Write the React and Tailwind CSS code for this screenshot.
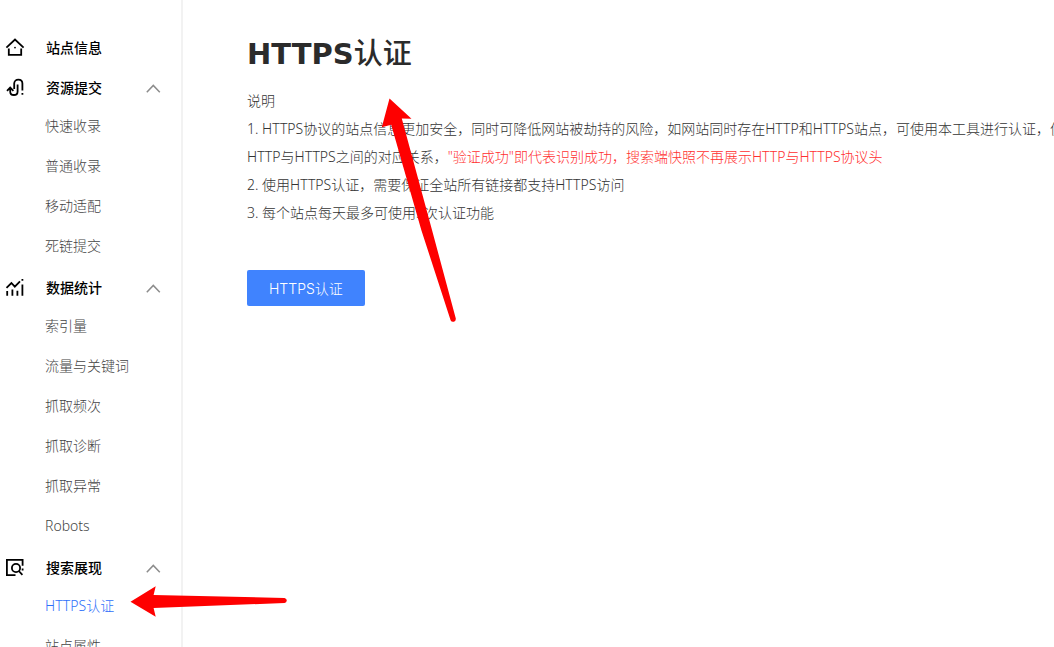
const groups = [
  { title: '站点信息', icon: HomeIcon },
  {
    title: '资源提交',
    icon: SubmitIcon,
    items: ['快速收录', '普通收录', '移动适配', '死链提交'],
  },
  {
    title: '数据统计',
    icon: StatsIcon,
    items: ['索引量', '流量与关键词', '抓取频次', '抓取诊断', '抓取异常', 'Robots'],
  },
  {
    title: '搜索展现',
    icon: SearchIcon,
    items: ['HTTPS认证', '站点属性'],
  },
];

const current = 'HTTPS认证';

function Icon({ children }) {
  return (
    <svg
      viewBox="0 0 20 20"
      className="size-5 shrink-0"
      fill="none"
      stroke="currentColor"
      strokeWidth="1.8"
      aria-hidden="true"
    >
      {children}
    </svg>
  );
}

function HomeIcon() {
  return (
    <Icon>
      <path d="M1.4 9.6 10 1.6l8.6 8M3.8 10.4v6.4h12.4v-6.4" />
      <circle cx="10" cy="9.6" r=".9" fill="currentColor" stroke="none" />
    </Icon>
  );
}

function SubmitIcon() {
  return (
    <Icon>
      <path d="M2 12.8 5.2 9.6l3.2 3.2M5.2 10v3.4c0 4.8 7.4 4.8 7.4 0V6.4M9.2 11V5.6c0-5.4 8.2-5.4 8.2 0v7M17.4 15v1.8" />
    </Icon>
  );
}

function StatsIcon() {
  return (
    <Icon>
      <path d="M1.5 9.8 6.4 5l3.4 3.6 5.2-5.2M2.2 13v4.8M7.4 11.6v6.2M12.4 12.8v5M17.4 6.6v11.2M17.4 1v1.8" />
    </Icon>
  );
}

function SearchIcon() {
  return (
    <Icon>
      <path d="M10.5 17.2H1.9V1.8h15.7v6M17.6 10.6v1.8" />
      <circle cx="11" cy="10" r="4.1" />
      <path d="m13.8 13 3.6 3.8" />
    </Icon>
  );
}

function Chevron() {
  return (
    <svg
      viewBox="0 0 16 10"
      className="h-2.5 w-4"
      fill="none"
      stroke="currentColor"
      strokeWidth="1.5"
      aria-hidden="true"
    >
      <path d="m1.8 9.2 6.5-6.8 6.5 6.8" />
    </svg>
  );
}

function Sidebar() {
  return (
    <nav className="w-[183px] shrink-0 border-r-2 border-[#f2f2f2] pt-7">
      {groups.map(({ title, icon: GroupIcon, items }) => (
        <section key={title}>
          <button
            type="button"
            className="flex h-10 w-full items-center pr-5 pl-[5px] font-medium text-black"
          >
            <GroupIcon />
            <span className="ml-[21px] flex-1 text-left">{title}</span>
            {items && (
              <span className="text-[#8c8c8c]">
                <Chevron />
              </span>
            )}
          </button>
          {items && (
            <ul>
              {items.map((item) => (
                <li key={item}>
                  <a
                    href="#"
                    className={
                      item === current
                        ? 'flex h-10 items-center pb-1 pl-[45px] font-light text-[#2f70fa]'
                        : 'flex h-10 items-center pb-1 pl-[45px] font-light text-[#444]'
                    }
                  >
                    {item}
                  </a>
                </li>
              ))}
            </ul>
          )}
        </section>
      ))}
    </nav>
  );
}

function Arrows() {
  return (
    <svg
      className="pointer-events-none absolute top-0 left-0 h-[647px] w-[500px]"
      viewBox="0 0 500 647"
      fill="#fe0000"
      aria-hidden="true"
    >
      <path d="M389.5 98.5 411.5 118.8 401.8 118.4 432 230 455.8 318.5Q456 321 454 321.7 451.5 322.3 450.6 320.2L421.3 230 391.2 124.8 381.8 127.3Z" />
      <path d="M130.5 601.8 155.7 586.2 153.6 595 284.5 598Q286.8 598.6 286.8 600.5 286.6 602.6 284.5 603L153.6 608 155.7 616.8Z" />
    </svg>
  );
}

export default function App() {
  return (
    <div className="relative flex h-screen overflow-hidden bg-white font-['Noto_Sans','Noto_Sans_CJK_SC',sans-serif] text-sm">
      <Sidebar />
      <main className="min-w-0 flex-1 overflow-hidden pt-8 pl-16">
        <h1 className="font-['DejaVu_Sans','Noto_Sans_CJK_SC',sans-serif] text-[29px] leading-[44px] font-bold text-[#2b2b2b]">
          HTTPS<span className="font-medium">认证</span>
        </h1>
        <div className="mt-[11px] leading-7 font-light whitespace-nowrap text-[#333]">
          <p>说明</p>
          <p>
            1. HTTPS协议的站点信息更加安全，同时可降低网站被劫持的风险，如网站同时存在HTTP和HTTPS站点，可使用本工具进行认证，便于
            <br />
            HTTP与HTTPS之间的对应关系，
            <span className="text-[#ff3030]">
              "验证成功"即代表识别成功，搜索端快照不再展示HTTP与HTTPS协议头
            </span>
          </p>
          <p>2. 使用HTTPS认证，需要保证全站所有链接都支持HTTPS访问</p>
          <p>3. 每个站点每天最多可使用5次认证功能</p>
        </div>
        <button
          type="button"
          className="mt-[43px] h-9 rounded-xs bg-[#4083fe] px-[22px] pt-0.5 font-['Inter','Noto_Sans_CJK_SC',sans-serif] font-light text-white"
        >
          HTTPS认证
        </button>
      </main>
      <Arrows />
    </div>
  );
}
